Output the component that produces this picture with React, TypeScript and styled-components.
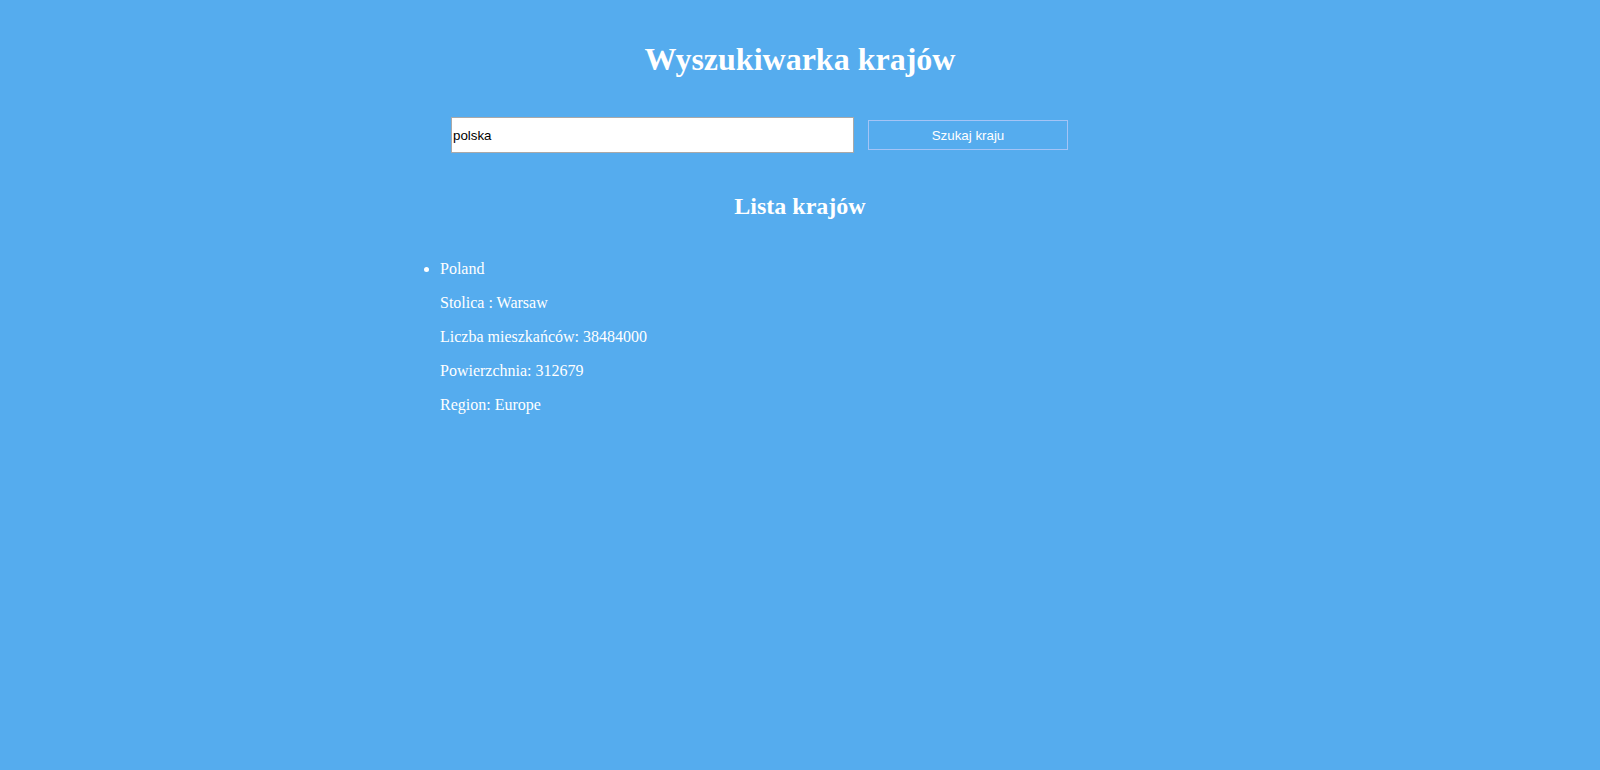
import React, { useState } from "react";
import styled, { createGlobalStyle } from "styled-components";

type Country = {
  name: string;
  capital: string;
  population: number;
  area: number;
  region: string;
};

const countries: Country[] = [
  { name: "Poland", capital: "Warsaw", population: 38484000, area: 312679, region: "Europe" },
];

const App: React.FC = () => {
  const [query, setQuery] = useState("polska");

  return (
    <>
      <GlobalStyle />
      <Page>
        <Title>Wyszukiwarka krajów</Title>

        <SearchForm onSubmit={(e) => e.preventDefault()}>
          <SearchInput value={query} onChange={(e) => setQuery(e.target.value)} />
          <SearchButton type="submit">Szukaj kraju</SearchButton>
        </SearchForm>

        <SubTitle>Lista krajów</SubTitle>

        <CountryList>
          {countries.map((c) => (
            <CountryItem key={c.name}>
              {c.name}
              <Detail>Stolica : {c.capital}</Detail>
              <Detail>Liczba mieszkańców: {c.population}</Detail>
              <Detail>Powierzchnia: {c.area}</Detail>
              <Detail>Region: {c.region}</Detail>
            </CountryItem>
          ))}
        </CountryList>
      </Page>
    </>
  );
};

export default App;

const GlobalStyle = createGlobalStyle`
  html, body {
    margin: 0;
    min-height: 100%;
    background-color: #55acee;
  }

  body {
    font-family: "Liberation Serif", "Times New Roman", serif;
    color: #ffffff;
  }
`;

const Page = styled.div`
  width: 800px;
  margin: 0 auto;
  padding: 20px 0 0;
`;

const Title = styled.h1`
  margin: 21px 0;
  font-size: 32px;
  font-weight: bold;
  text-align: center;
`;

const SearchForm = styled.form`
  display: flex;
  align-items: center;
  gap: 14px;
  margin: 39px 0 0 51px;
`;

const SearchInput = styled.input`
  box-sizing: border-box;
  width: 403px;
  height: 36px;
  padding: 0 1px;
  font-family: "Liberation Sans", Arial, sans-serif;
  font-size: 13.33px;
  color: #000000;
  background: #ffffff;
  border: 1px solid #a9a9a9;
  outline: none;
`;

const SearchButton = styled.button`
  box-sizing: border-box;
  width: 200px;
  height: 30px;
  font-family: "Liberation Sans", Arial, sans-serif;
  font-size: 13.33px;
  color: #ffffff;
  background: transparent;
  border: 1px solid #a4c4f6;
  cursor: pointer;
`;

const SubTitle = styled.h2`
  margin: 40px 0 0;
  font-size: 24px;
  font-weight: bold;
  text-align: center;
`;

const CountryList = styled.ul`
  margin: 40px 0 0;
  padding-left: 40px;
  font-size: 16px;
`;

const CountryItem = styled.li`
  line-height: 18px;
`;

const Detail = styled.p`
  margin: 16px 0 0;
`;
